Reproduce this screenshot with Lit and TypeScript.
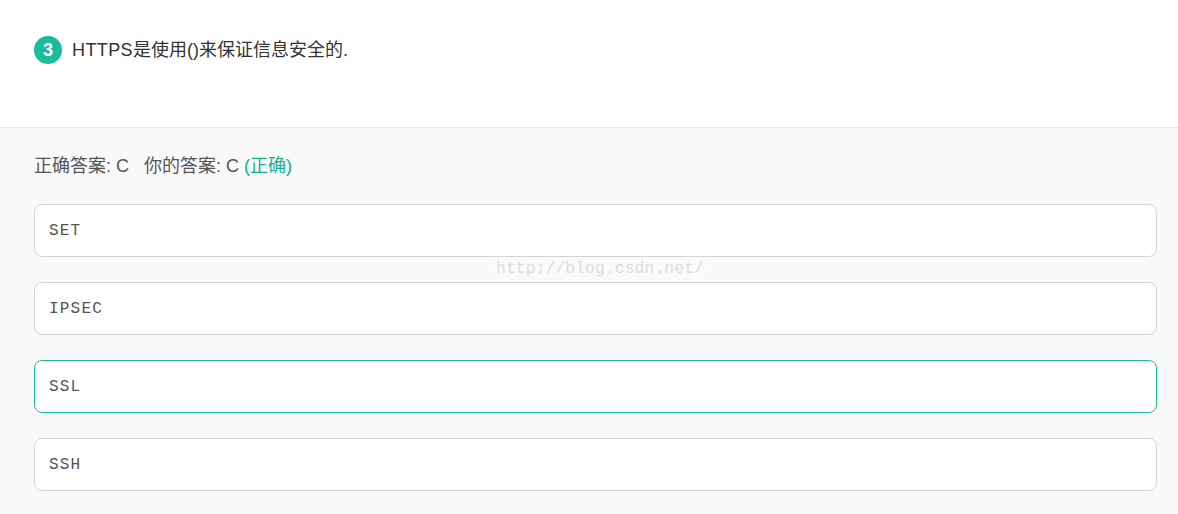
import { html, LitElement, css } from 'lit';
import { customElement } from 'lit/decorators.js';

const OPTIONS = [
  { label: 'SET', correct: false },
  { label: 'IPSEC', correct: false },
  { label: 'SSL', correct: true },
  { label: 'SSH', correct: false },
];

@customElement('app-root')
export class AppRoot extends LitElement {
  static styles = css`
    :host {
      display: block;
      position: relative;
      height: 514px;
      overflow: hidden;
      background: #f9f9f9;
      font-family: "Liberation Sans", "Noto Sans CJK SC", sans-serif;
    }

    * {
      box-sizing: border-box;
    }

    .question {
      height: 128px;
      padding: 36px 21px 0 34px;
      display: flex;
      align-items: flex-start;
      gap: 10px;
      background: #fff;
      border-bottom: 1px solid #e9e9e9;
      color: #333;
      font-size: 18px;
      line-height: 28px;
    }

    .latin {
      letter-spacing: 0.4px;
    }

    .number {
      width: 28px;
      height: 28px;
      border-radius: 50%;
      background: #1abc9c;
      color: #fff;
      text-align: center;
      font-size: 18px;
      font-weight: bold;
    }

    .answer {
      padding: 0 21px 0 34px;
    }

    .result {
      height: 76px;
      padding-top: 26px;
      color: #555;
      font-size: 18px;
      line-height: 24px;
      white-space: pre;
    }

    .result span {
      color: #16ae91;
    }

    .options {
      display: flex;
      flex-direction: column;
      gap: 25px;
    }

    .option {
      height: 53px;
      padding: 0 14px;
      display: flex;
      align-items: center;
      background: #fff;
      border: 1px solid #d4d4d4;
      border-radius: 8px;
      color: #555;
      font-family: "Liberation Mono", monospace;
      font-size: 16px;
      letter-spacing: 1.2px;
    }

    .option.correct {
      border-color: #1abc9c;
    }

    .watermark {
      position: absolute;
      left: 495px;
      top: 259px;
      height: 19px;
      padding: 0 1px;
      color: #dcdcda;
      background: #fafafa;
      font-family: "Liberation Mono", monospace;
      font-size: 16.5px;
      line-height: 19px;
    }
  `;

  render() {
    return html`
      <div class="question">
        <div class="number">3</div>
        <div><span class="latin">HTTPS</span>是使用()来保证信息安全的.</div>
      </div>
      <div class="answer">
        <div class="result">正确答案: C   你的答案: C <span>(正确)</span></div>
        <div class="options">
          ${OPTIONS.map(
            (o) => html`<div class="option ${o.correct ? 'correct' : ''}">${o.label}</div>`
          )}
        </div>
      </div>
      <div class="watermark">http://blog.csdn.net/</div>
    `;
  }
}
